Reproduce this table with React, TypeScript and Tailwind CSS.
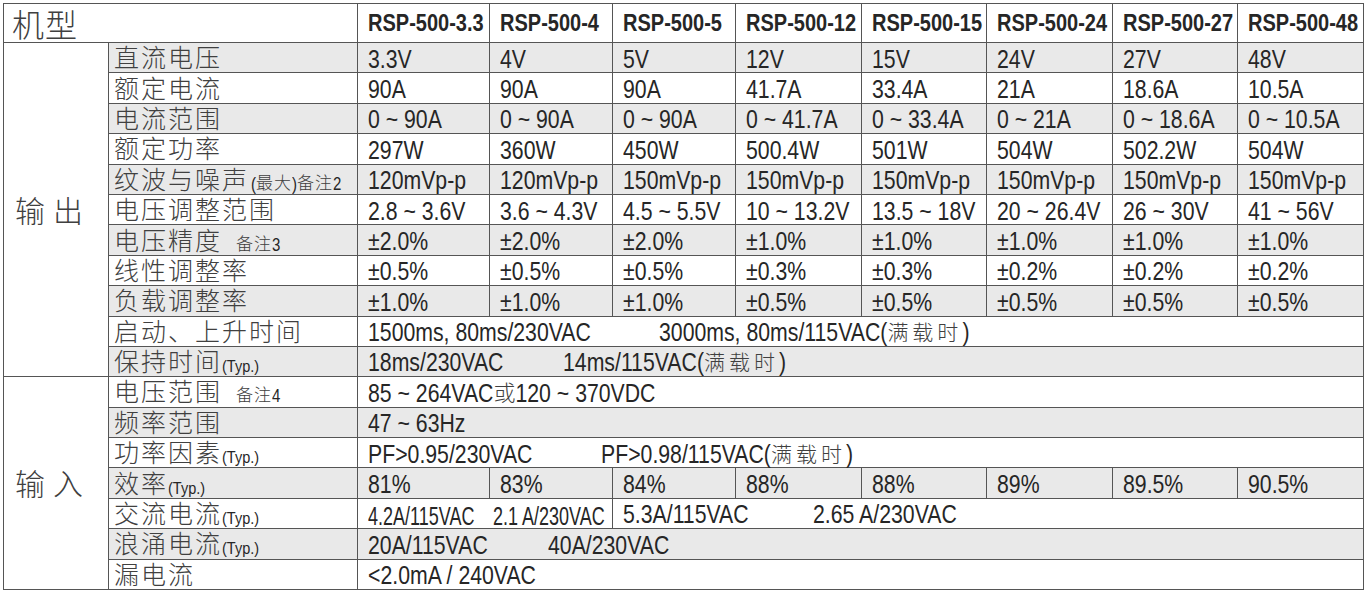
import React from "react";

const models = ["RSP-500-3.3", "RSP-500-4", "RSP-500-5", "RSP-500-12", "RSP-500-15", "RSP-500-24", "RSP-500-27", "RSP-500-48"];

const Cjk = ({ children, className = "" }: { children: React.ReactNode; className?: string }) => (
  <span className={`font-['Noto_Sans_CJK_SC_Light','Noto_Sans_CJK_SC',sans-serif] font-light text-[#404040] leading-none ${className}`}>{children}</span>
);

// Arial at a smaller size, stretched up to the tall narrow face of the sheet
const N = ({ children, className = "text-[21.25px] scale-y-[1.176]" }: { children: React.ReactNode; className?: string }) => (
  <span className={`inline-block leading-none ${className}`}>{children}</span>
);

const Label = ({ text, extra }: { text: string; extra?: React.ReactNode }) => (
  <span className="whitespace-nowrap">
    <Cjk className="text-[25px] tracking-[2px]">{text}</Cjk>
    {extra}
  </span>
);

const Typ = () => <N className="text-[14.5px] scale-y-[1.17]">(Typ.)</N>;
const Note = ({ n }: { n: string }) => (
  <span className="ml-[14px]">
    <Cjk className="text-[17px] tracking-[1px]">备注</Cjk>
    <N className="text-[15px] scale-y-[1.2]">{n}</N>
  </span>
);
const Full = () => (
  <>
    <N>(</N>
    <Cjk className="text-[21px] tracking-[4px]">满载时</Cjk>
    <N>)</N>
  </>
);

type Row = { label: React.ReactNode; cells?: string[]; span?: React.ReactNode };

const output: Row[] = [
  { label: <Label text="直流电压" />, cells: ["3.3V", "4V", "5V", "12V", "15V", "24V", "27V", "48V"] },
  { label: <Label text="额定电流" />, cells: ["90A", "90A", "90A", "41.7A", "33.4A", "21A", "18.6A", "10.5A"] },
  { label: <Label text="电流范围" />, cells: ["0 ~ 90A", "0 ~ 90A", "0 ~ 90A", "0 ~ 41.7A", "0 ~ 33.4A", "0 ~ 21A", "0 ~ 18.6A", "0 ~ 10.5A"] },
  { label: <Label text="额定功率" />, cells: ["297W", "360W", "450W", "500.4W", "501W", "504W", "502.2W", "504W"] },
  {
    label: (
      <Label
        text="纹波与噪声"
        extra={
          <span className="ml-[2px]">
            <N className="text-[15px] scale-y-[1.2]">(</N>
            <Cjk className="text-[17px] tracking-[1px]">最大</Cjk>
            <N className="text-[15px] scale-y-[1.2]">)</N>
            <Cjk className="text-[17px] tracking-[1px]">备注</Cjk>
            <N className="text-[15px] scale-y-[1.2]">2</N>
          </span>
        }
      />
    ),
    cells: ["120mVp-p", "120mVp-p", "150mVp-p", "150mVp-p", "150mVp-p", "150mVp-p", "150mVp-p", "150mVp-p"],
  },
  { label: <Label text="电压调整范围" />, cells: ["2.8 ~ 3.6V", "3.6 ~ 4.3V", "4.5 ~ 5.5V", "10 ~ 13.2V", "13.5 ~ 18V", "20 ~ 26.4V", "26 ~ 30V", "41 ~ 56V"] },
  { label: <Label text="电压精度" extra={<Note n="3" />} />, cells: ["±2.0%", "±2.0%", "±2.0%", "±1.0%", "±1.0%", "±1.0%", "±1.0%", "±1.0%"] },
  { label: <Label text="线性调整率" />, cells: ["±0.5%", "±0.5%", "±0.5%", "±0.3%", "±0.3%", "±0.2%", "±0.2%", "±0.2%"] },
  { label: <Label text="负载调整率" />, cells: ["±1.0%", "±1.0%", "±1.0%", "±0.5%", "±0.5%", "±0.5%", "±0.5%", "±0.5%"] },
  {
    label: <Label text="启动、上升时间" />,
    span: (
      <>
        <span className="inline-block w-[291px]"><N>1500ms, 80ms/230VAC</N></span>
        <N>3000ms, 80ms/115VAC</N>
        <Full />
      </>
    ),
  },
  {
    label: <Label text="保持时间" extra={<Typ />} />,
    span: (
      <>
        <span className="inline-block w-[195px]"><N>18ms/230VAC</N></span>
        <N>14ms/115VAC</N>
        <Full />
      </>
    ),
  },
];

const input: Row[] = [
  {
    label: <Label text="电压范围" extra={<Note n="4" />} />,
    span: (
      <>
        <N>85 ~ 264VAC</N>
        <Cjk className="text-[22px]">或</Cjk>
        <N>120 ~ 370VDC</N>
      </>
    ),
  },
  { label: <Label text="频率范围" />, span: <N>47 ~ 63Hz</N> },
  {
    label: <Label text="功率因素" extra={<Typ />} />,
    span: (
      <>
        <span className="inline-block w-[233px]"><N>PF&gt;0.95/230VAC</N></span>
        <N>PF&gt;0.98/115VAC</N>
        <Full />
      </>
    ),
  },
  { label: <Label text="效率" extra={<Typ />} />, cells: ["81%", "83%", "84%", "88%", "88%", "89%", "89.5%", "90.5%"] },
  { label: <Label text="交流电流" extra={<Typ />} />, span: "ac" },
  {
    label: <Label text="浪涌电流" extra={<Typ />} />,
    span: (
      <>
        <span className="inline-block w-[180px]"><N>20A/115VAC</N></span>
        <N>40A/230VAC</N>
      </>
    ),
  },
  { label: <Label text="漏电流" />, span: <N>&lt;2.0mA / 240VAC</N> },
];

const cell = "border border-[#555] p-0 align-middle";
const Box = ({ children, className = "pl-[10px]" }: { children: React.ReactNode; className?: string }) => (
  <div className={`h-[29.4px] flex items-center whitespace-nowrap ${className}`}>
    <div>{children}</div>
  </div>
);

const Section = ({ title, rows, grayFirst }: { title: string; rows: Row[]; grayFirst: boolean }) => (
  <>
    {rows.map((r, i) => {
      const gray = (i % 2 === 0) === grayFirst;
      const bg = gray ? "bg-[#e9e9e9]" : "bg-white";
      return (
        <tr key={i}>
          {i === 0 && (
            <td rowSpan={rows.length} className={`${cell} bg-white pl-[11px]`}>
              <Cjk className="text-[30px] tracking-[8px]">{title}</Cjk>
            </td>
          )}
          <td className={`${cell} ${bg}`}>
            <Box className="pl-[5px]">{r.label}</Box>
          </td>
          {r.cells &&
            r.cells.map((c, j) => (
              <td key={j} className={`${cell} ${bg}`}>
                <Box>
                  <N>{c}</N>
                </Box>
              </td>
            ))}
          {r.span === "ac" ? (
            <>
              <td colSpan={2} className={`${cell} ${bg}`}>
                <Box>
                  <span className="inline-block w-[125px]"><N className="text-[18px] scale-y-[1.39]">4.2A/115VAC</N></span>
                  <N className="text-[18px] scale-y-[1.39]">2.1 A/230VAC</N>
                </Box>
              </td>
              <td colSpan={6} className={`${cell} ${bg}`}>
                <Box>
                  <span className="inline-block w-[190px]"><N>5.3A/115VAC</N></span>
                  <N>2.65 A/230VAC</N>
                </Box>
              </td>
            </>
          ) : (
            !r.cells && (
              <td colSpan={8} className={`${cell} ${bg}`}>
                <Box>{r.span}</Box>
              </td>
            )
          )}
        </tr>
      );
    })}
  </>
);

export default function App() {
  return (
    <div className="w-[1368px] h-[590px] bg-white pl-[3px] pt-[3px] text-[#262626] font-['Liberation_Sans',sans-serif] text-[25px] leading-[26px] overflow-hidden">
      <table className="table-fixed border-collapse w-[1360px]">
        <colgroup>
          <col className="w-[105px]" />
          <col className="w-[249px]" />
          <col className="w-[132px]" />
          <col className="w-[123px]" />
          <col className="w-[123px]" />
          <col className="w-[126px]" />
          <col className="w-[125px]" />
          <col className="w-[126px]" />
          <col className="w-[125px]" />
          <col className="w-[126px]" />
        </colgroup>
        <tbody>
          <tr>
            <td colSpan={2} className={`${cell} bg-white`}>
              <div className="h-[38px] flex items-center pl-[8px]">
                <Cjk className="text-[32px] tracking-[1px]">机型</Cjk>
              </div>
            </td>
            {models.map((m) => (
              <td key={m} className={`${cell} bg-white font-bold`}>
                <div className="h-[38px] flex items-center pl-[10px] whitespace-nowrap">
                  <N className="text-[20px] scale-y-[1.2]">{m}</N>
                </div>
              </td>
            ))}
          </tr>
          <Section title="输出" rows={output} grayFirst={true} />
          <Section title="输入" rows={input} grayFirst={false} />
        </tbody>
      </table>
    </div>
  );
}
